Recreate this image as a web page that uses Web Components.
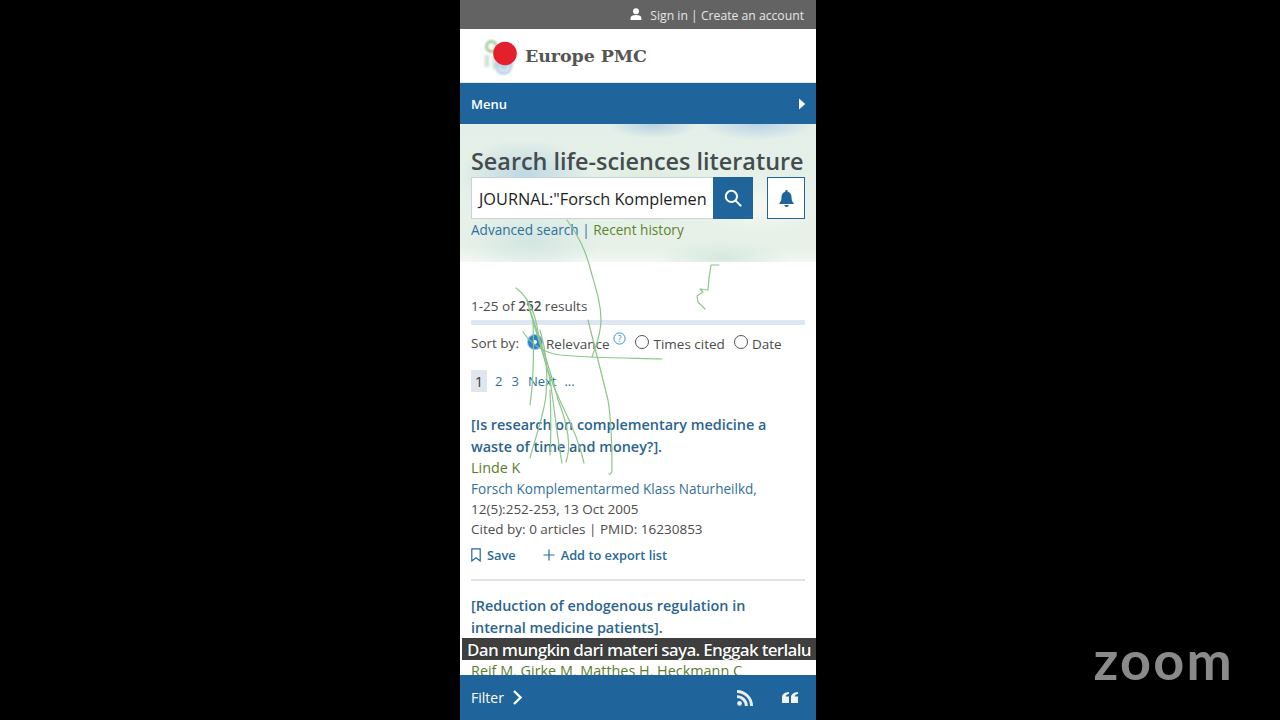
<!DOCTYPE html>
<html lang="en"><head><meta charset="utf-8"><title>Europe PMC</title>
<style>
html,body{margin:0;height:100%;background:#000;overflow:hidden}
body{font-family:"Open Sans","Noto Sans",sans-serif;color:#4a4a4a}
</style></head><body>
<epmc-screen>
  <epmc-phone slot="phone">
    <epmc-topbar></epmc-topbar>
    <epmc-brand></epmc-brand>
    <epmc-menu></epmc-menu>
    <epmc-hero></epmc-hero>
    <epmc-sortbar></epmc-sortbar>
    <epmc-article>
      <span slot="title">[Is research on complementary medicine a waste of time and money?].</span>
      <span slot="author">Linde K</span>
      <span slot="journal">Forsch Komplementarmed Klass Naturheilkd</span>
      <span slot="issue">12(5):252-253, 13 Oct 2005</span>
      <span slot="meta">Cited by: 0 articles | PMID: 16230853</span>
    </epmc-article>
    <epmc-article gap>
      <span slot="title">[Reduction of endogenous regulation in internal medicine patients].</span>
      <span slot="author">Reif M, Girke M, Matthes H, Heckmann C</span>
    </epmc-article>
    <epmc-footer slot="footer"></epmc-footer>
    <epmc-caption slot="overlay">Dan mungkin dari materi saya. Enggak terlalu</epmc-caption>
    <epmc-ink slot="overlay"></epmc-ink>
  </epmc-phone>
  <epmc-zoomlogo slot="logo"></epmc-zoomlogo>
</epmc-screen>
<script>
function def(name, html){
  customElements.define(name, class extends HTMLElement{
    constructor(){super();this.attachShadow({mode:'open'}).innerHTML=html;}
  });
}
def('epmc-screen',`<style>
:host{display:grid;grid-template-columns:460px 356px 1fr;height:720px;background:#000}
.r{grid-column:3;display:flex;justify-content:flex-end;align-items:flex-end}
.p{grid-column:2;min-width:0}
</style><div class="p"><slot name="phone"></slot></div><div class="r"><slot name="logo"></slot></div>`);

def('epmc-phone',`<style>
:host{display:flex;flex-direction:column;position:relative;height:720px;background:#fff;overflow:hidden}
.main{flex:1;min-height:0;overflow:hidden;display:flex;flex-direction:column}
</style><div class="main"><slot></slot></div><slot name="footer"></slot><slot name="overlay"></slot>`);

def('epmc-topbar',`<style>
:host{display:flex;flex:none;height:29px;box-sizing:border-box;background:#636363;color:#e6e6e6;align-items:center;justify-content:flex-end;padding:1px 12px 0 0;font-size:12.2px;gap:8px}
svg{width:12px;height:12px;fill:#fff;display:block;margin-top:-2px}
</style><svg viewBox="0 0 12 12"><circle cx="6" cy="3.2" r="3"/><path d="M.6 12V10.2C.6 8 2.6 6.9 6 6.9S11.4 8 11.4 10.2V12Z"/></svg><span>Sign in | Create an account</span>`);

def('epmc-brand',`<style>
:host{display:flex;flex:none;height:54px;box-sizing:border-box;background:#fff;border-bottom:1px solid #e3e8ec;align-items:center;padding-left:22px}
svg{width:43px;height:50px;display:block;flex:none}
span{font:bold 17.5px "DejaVu Serif","Liberation Serif",serif;color:#555;letter-spacing:-.1px}
</style><svg viewBox="0 0 43 50"><defs><filter id="b"><feGaussianBlur stdDeviation=".8"/></filter></defs>
<g filter="url(#b)"><circle cx="9.500" cy="15.500" r="5" fill="none" stroke="#a4cb9b" stroke-width="3"/><path d="M5 24V36" stroke="#d4e2d5" stroke-width="5"/><path d="M12 25V38" stroke="#cfe0d2" stroke-width="3"/><path d="M13 33Q13 44 21 44T31 34V30H14Z" fill="#bcd3e6"/><path d="M17 36Q18 40 22 40T27 35" fill="none" stroke="#e8f0f6" stroke-width="1.600"/></g>
<circle cx="23" cy="22.500" r="11.800" fill="#e4202c"/></svg><span>Europe PMC</span>`);

def('epmc-menu',`<style>
:host{display:flex;flex:none;height:41px;box-sizing:border-box;background:#1f659b;color:#fff;align-items:center;justify-content:space-between;padding:0 10px 0 11px;font-size:13px;font-weight:600}
svg{width:8px;height:12px;fill:#fff;display:block}
</style><span>Menu</span><svg viewBox="0 0 8 12"><path d="M1 0.500 7.200 6 1 11.500Z"/></svg>`);

def('epmc-hero',`<style>
:host{display:block;flex:none;height:138px;box-sizing:border-box;padding:23px 11px 0 11px;
background:
 radial-gradient(ellipse 44px 13px at 193px 1px,#b6d1e2 0,transparent 100%),
 radial-gradient(ellipse 56px 16px at 298px 0,#b8d2e8 0,transparent 100%),
 radial-gradient(ellipse 66px 36px at 65px 52px,#bdd8e2 0,transparent 100%),
 radial-gradient(ellipse 70px 34px at 72px 116px,#d3e6e2 0,transparent 100%),
 radial-gradient(ellipse 56px 32px at 190px 70px,#d6ebd2 0,transparent 100%),
 radial-gradient(ellipse 66px 30px at 300px 82px,#f5f8f1 0,transparent 100%),
 radial-gradient(ellipse 70px 18px at 262px 134px,#d5e8de 0,transparent 100%),
 linear-gradient(#e3efe8,#e7f1e8 90%,#f3f8f4);
}
h1{margin:0;font-size:23.4px;line-height:28px;font-weight:600;color:#444c4e;white-space:nowrap}
.row{display:flex;margin-top:2px;height:42px}
.box{width:242px;box-sizing:border-box;background:#fff;border:1px solid #c9d2d4;border-right:0;display:flex;align-items:center;padding:1px 7px 0 7px;font-size:16.300px;color:#1d1d1d;white-space:nowrap}
.go{width:40px;background:#1f659b;display:flex;align-items:center;justify-content:center}
.go svg{width:18px;height:18px;fill:none;stroke:#fff;stroke-width:2}
.bell{width:38px;margin-left:14px;box-sizing:border-box;background:#fff;border:1px solid #1f659b;display:flex;align-items:center;justify-content:center}
.bell svg{width:15px;height:17px;fill:#1f659b}
.links{font-size:13.600px;line-height:20px;margin-top:1px;color:#2f6f9c}
.links b{font-weight:400;color:#5c8429}
</style><h1>Search life-sciences literature</h1>
<div class="row"><div class="box">JOURNAL:"Forsch Komplemen</div>
<div class="go"><svg viewBox="0 0 18 18"><circle cx="7.400" cy="7.400" r="5.600"/><path d="M11.600 11.600 16.600 16.600" stroke-linecap="round"/></svg></div>
<div class="bell"><svg viewBox="0 0 15 17"><path d="M7.500 0a1.200 1.200 0 0 1 1.200 1.200v.6C11.300 2.400 12.500 4.600 12.500 7c0 3.500 1 4.800 2.200 6.200V14H.3v-.8C1.500 11.800 2.500 10.500 2.500 7c0-2.400 1.200-4.600 3.800-5.200v-.6A1.200 1.200 0 0 1 7.500 0Z"/><path d="M5.300 15h4.400a2.200 2 0 0 1-4.400 0Z"/></svg></div></div>
<div class="links">Advanced search | <b>Recent history</b></div>`);

def('epmc-sortbar',`<style>
:host{display:block;flex:none;padding:34px 11px 0;font-size:13.500px;line-height:20px;color:#4c4c4c}
b{font-weight:600}
.bar{height:5px;margin-top:4px;background:#dde6f1;border-radius:1px}
.sort{display:flex;align-items:center;height:20px;margin-top:8px;white-space:nowrap}
.lbl{width:57px}
.rad{width:14px;height:14px;box-sizing:border-box;border-radius:50%;border:1.300px solid #555;background:#fff;margin-top:-3px;flex:none}
.on{background:#2b7fd0;border:0;position:relative;box-shadow:0 0 0 1px #9cc4e8}
.on::after{content:"";position:absolute;left:5px;top:5px;width:4px;height:4px;border-radius:50%;background:#fff}
.t{margin-left:4px;margin-top:2px}
.help{width:13px;height:13px;margin:-9px 0 0 4px;flex:none;display:block}
.pg{display:flex;align-items:center;height:22px;margin-top:17px;color:#2f6f9c;font-size:13px}
.pg i{font-style:normal;font-size:15px;background:#dfe6ee;color:#3d3d3d;width:16px;height:22px;display:flex;align-items:center;justify-content:center;margin-right:8px}
.pg span{margin-right:9px}
.pg .n{margin-right:8px}
</style><div>1-25 of <b>252</b> results</div><div class="bar"></div>
<div class="sort"><span class="lbl">Sort by:</span><span class="rad on"></span><span class="t">Relevance</span>
<svg class="help" viewBox="0 0 13 13"><circle cx="6.500" cy="6.500" r="5.600" fill="none" stroke="#3b8fd0"/><text x="6.500" y="9.500" text-anchor="middle" font-size="8.500" font-family="Open Sans" fill="#3b8fd0">?</text></svg>
<span class="rad" style="margin-left:9px"></span><span class="t">Times cited</span><span class="rad" style="margin-left:9px"></span><span class="t">Date</span></div>
<div class="pg"><i>1</i><span>2</span><span>3</span><span class="n">Next</span><span>...</span></div>`);

def('epmc-article',`<style>
:host{display:block;flex:none;padding:22px 11px 0;font-size:13.500px;line-height:20px;color:#4c4c4c}
.t{font-size:14.400px;line-height:22px;font-weight:600;color:#2a6490;margin-right:30px}
.a{color:#5c7d2e;font-size:14.400px}
:host([gap]){padding-top:14px}
:host([gap]) .a{padding-top:22px}
.j{margin-top:1px;color:#33709b;font-size:13.550px}
.acts{display:flex;align-items:center;height:20px;margin-top:6px;color:#2a6a96;font-size:12.800px;font-weight:600}
.acts svg{display:block;flex:none}
.acts .s{margin:0 6px 0 0}
.acts .p{margin:0 6px 0 27px}
.hr{height:2px;background:#dfe1e2;margin-top:14px}
:host([gap]) .j,:host([gap]) .acts,:host([gap]) .hr,:host([gap]) .x{display:none}
</style><div class="t"><slot name="title"></slot></div>
<div class="a"><slot name="author"></slot></div>
<div class="j"><slot name="journal"></slot>,</div>
<div class="x"><slot name="issue"></slot></div>
<div class="x"><slot name="meta"></slot></div>
<div class="acts"><svg class="s" width="10" height="14" viewBox="0 0 10 14"><path d="M.8.8H9.200V13L5 9.800.8 13Z" fill="none" stroke="#2a6a96" stroke-width="1.200"/></svg><span>Save</span>
<svg class="p" width="12" height="12" viewBox="0 0 12 12"><path d="M6 .5V11.500M.5 6H11.500" stroke="#2a6a96" stroke-width="1.200"/></svg><span>Add to export list</span></div>
<div class="hr"></div>`);

def('epmc-footer',`<style>
:host{display:flex;flex:none;height:45px;box-sizing:border-box;background:#1f659b;color:#fff;align-items:center;padding:0 18px 0 11px;font-size:14px;position:relative;z-index:2}
span{margin-right:9px}
.c{width:9px;height:15px;fill:none;stroke:#fff;stroke-width:2.300}
.rss{width:16px;height:16px;margin-left:auto;fill:#e8eff5}
.q{width:16px;height:11px;margin-left:29px;fill:#f0f4f8}
</style><span>Filter</span><svg class="c" viewBox="0 0 9 15"><path d="M1 1 7.500 7.500 1 14"/></svg>
<svg class="rss" viewBox="0 0 17 17"><circle cx="2.700" cy="14.300" r="2.500"/><path d="M0 5.500V8.600A8.400 8.400 0 0 1 8.400 17H11.500A11.500 11.500 0 0 0 0 5.500Z"/><path d="M0 0V3.100A13.900 13.900 0 0 1 13.900 17H17A17 17 0 0 0 0 0Z"/></svg>
<svg class="q" viewBox="0 0 16 12" preserveAspectRatio="none"><path d="M7 0V2C5 2.500 4 3.500 3.700 5H7V12H0V6C0 2.500 2.500.4 7 0Z"/><path d="M16 0V2C14 2.500 13 3.500 12.700 5H16V12H9V6C9 2.500 11.500.4 16 0Z"/></svg>`);

def('epmc-caption',`<style>
:host{position:absolute;left:2px;right:0;top:638px;height:22px;background:rgba(48,48,48,.93);color:#fff;z-index:3;display:flex;align-items:center;justify-content:center;font-size:17px;font-weight:600;white-space:nowrap;letter-spacing:-.68px;text-shadow:0 0 1px #000}
</style><slot></slot>`);

def('epmc-ink',`<style>
:host{position:absolute;inset:0;z-index:1;pointer-events:none}
svg{display:block;width:356px;height:720px}
path{fill:none;stroke:#8cc68c;stroke-width:1.200;stroke-linecap:round;stroke-linejoin:round}
</style><svg viewBox="460 0 356 720">
<path d="M567 220C578 235 586 250 592 275 597 292 601 305 601 320 601 335 596 345 592 357"/>
<path d="M588 320C594 345 602 375 608 400 612 425 612 450 612 470 612 473 610 475 609 474"/>
<path d="M516 288C527 296 535 312 538 332 543 358 552 385 562 405 572 425 580 445 584 463"/>
<path d="M523 332C532 345 545 353 560 355 590 358 625 358 662 359"/>
<path d="M527 300C532 320 541 345 549 375 553 395 556 430 562 463"/>
<path d="M530 310C540 340 552 375 558 400 566 420 572 445 566 462"/>
<path d="M540 330C546 350 548 375 546 395 544 415 536 435 530 458"/>
<path d="M533 320C534 350 533 385 530 405"/>
<path d="M550 390C551 415 551 440 550 455"/>
<path d="M719 265 711 265 709 278 708 290 700 289 703 292 697 296 698 302 705 309"/>
</svg>`);

def('epmc-zoomlogo',`<style>
:host{display:block;margin:0 46px 33px 0;font:bold 54px/54px Lato,"Noto Sans",sans-serif;color:#8a8a8a;letter-spacing:2.200px}
</style>zoom`);
</script>
</body></html>
